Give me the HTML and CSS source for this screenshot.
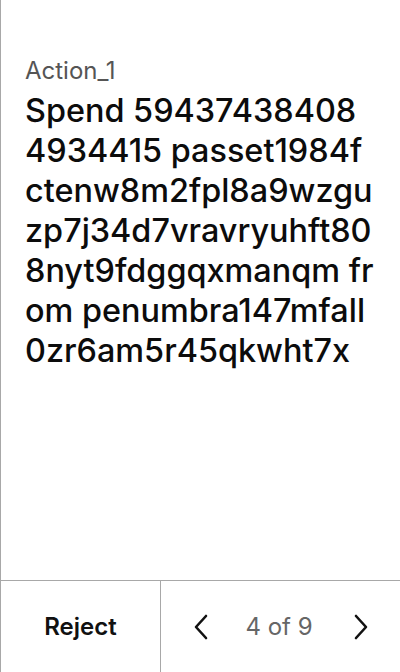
FILE: index.html
```html
<!DOCTYPE html>
<html>
<head>
<meta charset="utf-8">
<link rel="stylesheet" href="styles.css">
</head>
<body>
<div class="screen">
  <main class="content">
    <div class="label">Action_1</div>
    <div class="message">Spend 594374384084934415 passet1984fctenw8m2fpl8a9wzguzp7j34d7vravryuhft808nyt9fdggqxmanqm from penumbra147mfall0zr6am5r45qkwht7x</div>
  </main>
  <footer class="footer">
    <div class="reject">Reject</div>
    <div class="pager">
      <svg class="chev" width="16" height="26" viewBox="0 0 16 26"><path d="M13 2 L3 13 L13 24" fill="none" stroke="#111" stroke-width="2.6" stroke-linecap="round" stroke-linejoin="round"/></svg>
      <span class="count">4 of 9</span>
      <svg class="chev" width="16" height="26" viewBox="0 0 16 26"><path d="M3 2 L13 13 L3 24" fill="none" stroke="#111" stroke-width="2.6" stroke-linecap="round" stroke-linejoin="round"/></svg>
    </div>
  </footer>
</div>
</body>
</html>
```
FILE: styles.css
```css
html, body {
  margin: 0;
  padding: 0;
  background: #fff;
}
body {
  font-family: Inter, "Noto Sans", sans-serif;
  color: #111;
}
.screen {
  width: 400px;
  height: 672px;
  box-sizing: border-box;
  border-left: 1px solid #a8a8a8;
  display: flex;
  flex-direction: column;
}
.content {
  flex: 1;
  padding: 57px 26px 0 24px;
}
.label {
  font-size: 24px;
  line-height: 28px;
  color: #555;
}
.message {
  margin-top: 6px;
  font-size: 32.4px;
  line-height: 40px;
  font-weight: 500;
  word-break: break-all;
  color: #0c0c0c;
}
.footer {
  height: 92px;
  box-sizing: border-box;
  border-top: 1px solid #a8a8a8;
  display: flex;
}
.reject {
  width: 159px;
  border-right: 1px solid #a8a8a8;
  display: flex;
  align-items: center;
  justify-content: center;
  font-size: 24px;
  font-weight: 600;
}
.pager {
  flex: 1;
  display: flex;
  align-items: center;
  justify-content: space-between;
  padding: 0 31px 0 32px;
}
.count {
  font-size: 24px;
  color: #666;
  margin-right: 4px;
}
```
